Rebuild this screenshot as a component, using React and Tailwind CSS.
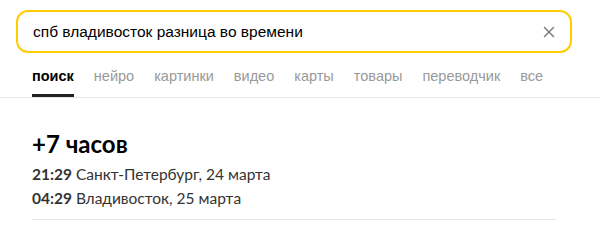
import { X } from "lucide-react";

const tabs = ["поиск", "нейро", "картинки", "видео", "карты", "товары", "переводчик", "все"];

export default function App() {
	return (
		<div className="w-[600px] h-[226px] bg-white overflow-hidden">
			{/* Search */}
			<div className="pt-[10px] pl-4 pr-7">
				<div className="h-[43px] border-2 border-[#fc0] rounded-xl flex items-center pl-[15px] pr-[12px]">
					<span className="flex-1 text-[15.5px] text-black font-['Liberation_Sans',Arial,sans-serif]">
						спб владивосток разница во времени
					</span>
					<X size={18} strokeWidth={2} className="text-[#7a7a7a]" />
				</div>
			</div>

			{/* Tabs */}
			<div className="border-b border-[#e6e6e6] mt-[10px] pl-8 flex gap-[20px] font-['Liberation_Sans',Arial,sans-serif] text-[14.5px]">
				{tabs.map((t, i) => (
					<div
						key={t}
						className={`h-[34px] pt-[3px] border-b-[3px] ${
							i === 0 ? "border-[#222] font-bold text-black" : "border-transparent text-[#999]"
						}`}
					>
						{t}
					</div>
				))}
			</div>

			{/* Result */}
			<div className="pl-8 pr-11 pt-[30px] font-['Lato',sans-serif] text-[#333]">
				<div className="text-[24px] font-bold text-black leading-[32px]">+7 часов</div>
				<div className="text-[15.5px] leading-[24px] mt-[2px]">
					<span className="font-bold">21:29</span> Санкт-Петербург, 24 марта
				</div>
				<div className="text-[15.5px] leading-[24px]">
					<span className="font-bold">04:29</span> Владивосток, 25 марта
				</div>
				<div className="border-b border-[#e6e6e6] mt-[9px]" />
			</div>
		</div>
	);
}
